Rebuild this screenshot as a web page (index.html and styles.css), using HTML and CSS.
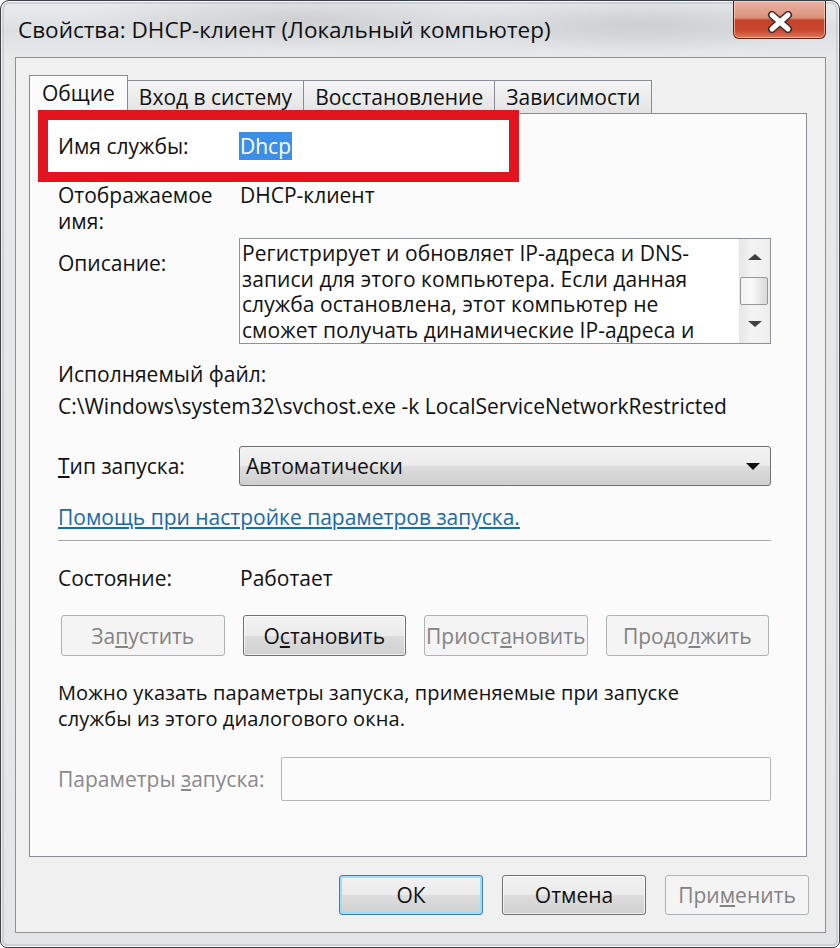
FILE: index.html
```html
<!DOCTYPE html>
<html lang="ru">
<head>
<meta charset="utf-8">
<title>Свойства: DHCP-клиент (Локальный компьютер)</title>
<link rel="stylesheet" href="styles.css">
</head>
<body>
<div class="window">
  <div class="titlebar">
    <div class="title">Свойства: DHCP-клиент (Локальный компьютер)</div>
    <div class="close">
      <svg width="28" height="22" viewBox="0 0 28 22">
        <path d="M6 4 L22 18 M22 4 L6 18" stroke="#3a2a28" stroke-width="8" stroke-linecap="round"/>
        <path d="M6 4 L22 18 M22 4 L6 18" stroke="#ffffff" stroke-width="5" stroke-linecap="round"/>
      </svg>
    </div>
  </div>
  <div class="client">
    <div class="tabs">
      <div class="tab active">Общие</div>
      <div class="tab">Вход в систему</div>
      <div class="tab">Восстановление</div>
      <div class="tab">Зависимости</div>
    </div>
    <div class="panel">
      <div class="row name-row">
        <div class="label">Имя службы:</div>
        <div class="value"><span class="selected">Dhcp</span></div>
      </div>
      <div class="row display-row">
        <div class="label">Отображаемое<br>имя:</div>
        <div class="value">DHCP-клиент</div>
      </div>
      <div class="row desc-row">
        <div class="label desc-label">Описание:</div>
        <div class="desc-box">
          <div class="desc-text">Регистрирует и обновляет IP-адреса и DNS-<br>записи для этого компьютера. Если данная<br>служба остановлена, этот компьютер не<br>сможет получать динамические IP-адреса и</div>
          <div class="scrollbar">
            <div class="sb-btn sb-up"><span class="tri-up"></span></div>
            <div class="sb-track"><div class="sb-thumb"></div></div>
            <div class="sb-btn sb-down"><span class="tri-down"></span></div>
          </div>
        </div>
      </div>
      <div class="exe-label">Исполняемый файл:</div>
      <div class="exe-path">C:\Windows\system32\svchost.exe -k LocalServiceNetworkRestricted</div>
      <div class="row start-row">
        <div class="label"><u>Т</u>ип запуска:</div>
        <div class="combo">
          <span>Автоматически</span>
          <span class="combo-arrow"></span>
        </div>
      </div>
      <a class="help-link" href="#">Помощь при настройке параметров запуска.</a>
      <div class="separator"></div>
      <div class="row status-row">
        <div class="label">Состояние:</div>
        <div class="value">Работает</div>
      </div>
      <div class="service-buttons">
        <div class="btn disabled">За<u>п</u>устить</div>
        <div class="btn">О<u>с</u>тановить</div>
        <div class="btn disabled">Приост<u>а</u>новить</div>
        <div class="btn disabled">Продо<u>л</u>жить</div>
      </div>
      <p class="note">Можно указать параметры запуска, применяемые при запуске<br>службы из этого диалогового окна.</p>
      <div class="row params-row">
        <div class="label params-label">Параметры <u>з</u>апуска:</div>
        <div class="params-input"></div>
      </div>
    </div>
    <div class="footer">
      <div class="btn dlg default">ОК</div>
      <div class="btn dlg">Отмена</div>
      <div class="btn dlg disabled">При<u>м</u>енить</div>
    </div>
  </div>
</div>
</body>
</html>
```

FILE: styles.css
```css
* { box-sizing: border-box; }
html, body { margin: 0; padding: 0; background: #ffffff; }
body {
  width: 840px;
  height: 948px;
  overflow: hidden;
  font-family: "Open Sans", "Noto Sans", sans-serif;
  font-size: 21px;
  color: #111;
}
.window {
  width: 840px;
  height: 948px;
  border: 1px solid #3d4145;
  border-radius: 9px 9px 7px 7px;
  background:
    radial-gradient(ellipse 220px 30px at 300px 18px, rgba(170,170,170,0.35), rgba(170,170,170,0) 100%),
    radial-gradient(ellipse 200px 30px at 640px 22px, rgba(160,160,160,0.3), rgba(160,160,160,0) 100%),
    linear-gradient(180deg, #e9ebed 0, #dde0e3 30px, #e6e8ea 56px, #e3e5e7 100%);
  padding: 0 13px 14px 14px;
  display: flex;
  flex-direction: column;
  box-shadow: inset 0 0 0 1px rgba(255,255,255,0.8), inset 0 0 0 3px rgba(190,194,198,0.6);
}
.titlebar {
  height: 56px;
  display: flex;
  justify-content: space-between;
  align-items: flex-start;
}
.title {
  margin: 15px 0 0 3px;
  font-size: 22.5px;
  line-height: 28px;
  color: #101010;
  white-space: nowrap;
}
.close {
  width: 93px;
  height: 38px;
  border: 1px solid #5a231a;
  border-top: none;
  border-radius: 0 0 6px 6px;
  background: linear-gradient(180deg, #eab4a4 0, #dc917b 45%, #c4412a 52%, #c9492f 80%, #dd7a5d 100%);
  box-shadow: inset 0 0 0 1px rgba(255,220,210,0.6);
  display: flex;
  align-items: center;
  justify-content: center;
  padding-top: 4px;
}
.client {
  flex: 1;
  border: 1px solid #8e9093;
  background: #f0f0f0;
  padding: 17px 18px 17px 13px;
  display: flex;
  flex-direction: column;
}
.tabs {
  display: flex;
  align-items: flex-end;
  height: 39px;
  margin-bottom: -1px;
  position: relative;
  z-index: 1;
}
.tab {
  height: 33px;
  margin-bottom: 1px;
  margin-left: -1px;
  padding: 0 11px;
  border: 1px solid #898c95;
  border-bottom: none;
  background: linear-gradient(180deg, #f5f5f5, #e3e3e3);
  display: flex;
  align-items: center;
  white-space: nowrap;
  line-height: 26px;
}
.tab.active {
  height: 39px;
  margin-bottom: 0;
  margin-left: 0;
  padding: 0 12px 4px;
  background: #fbfbfb;
  position: relative;
  z-index: 2;
}
.panel {
  flex: 1;
  border: 1px solid #898c95;
  background: #fbfbfb;
  padding: 0 35px 0 28px;
  display: flex;
  flex-direction: column;
  line-height: 26px;
}
.row {
  display: flex;
}
.label {
  width: 181px;
  flex: none;
}
.name-row {
  position: relative;
  z-index: 3;
  margin: -4px 0 0 -20px;
  width: 481px;
  border: 10px solid #e2141f;
  background: #ffffff;
  padding: 13px 0 13px 10px;
}
.selected {
  background: #3d8ee6;
  color: #fff;
  padding: 0 1px;
}
.display-row .value { margin-left: 1px; }
.desc-row { margin-top: 4px; }
.desc-label { padding-top: 12px; }
.desc-box {
  flex: 1;
  height: 106px;
  display: flex;
  border: 1px solid #8f9296;
  background: #ffffff;
  overflow: hidden;
}
.desc-text {
  flex: 1;
  padding: 2px 0 0 2px;
  line-height: 25.5px;
  white-space: nowrap;
  overflow: hidden;
  letter-spacing: 0.05px;
}
.scrollbar {
  width: 31px;
  display: flex;
  flex-direction: column;
  background: linear-gradient(90deg, #e6e6e6, #f3f3f3 40%, #efefef);
}
.sb-btn {
  height: 36px;
  display: flex;
  align-items: center;
  justify-content: center;
}
.sb-down { height: 38px; }
.sb-track { flex: 1; padding: 2px 2px 0 1px; }
.sb-thumb {
  height: 28px;
  border: 1px solid #979797;
  border-radius: 2px;
  background: linear-gradient(90deg, #f2f2f2, #fafafa 40%, #d8d8d8);
}
.tri-up, .tri-down {
  width: 0;
  height: 0;
  border-left: 7px solid transparent;
  border-right: 7px solid transparent;
}
.tri-up { border-bottom: 6px solid #404040; }
.tri-down { border-top: 6px solid #404040; }
.exe-label { margin-top: 17px; }
.exe-path { margin-top: 6px; white-space: nowrap; }
.start-row { margin-top: 27px; align-items: center; height: 40px; }
.combo {
  flex: 1;
  height: 40px;
  border: 1px solid #707070;
  border-radius: 3px;
  background: linear-gradient(180deg, #f3f3f3 0, #ebebeb 50%, #dddddd 51%, #cfcfcf 100%);
  display: flex;
  align-items: center;
  justify-content: space-between;
  padding: 0 10px 0 6px;
}
.combo-arrow {
  width: 0;
  height: 0;
  border-left: 7px solid transparent;
  border-right: 7px solid transparent;
  border-top: 7px solid #111;
}
.help-link {
  margin-top: 18px;
  color: #1a6aaa;
  text-decoration: underline;
  align-self: flex-start;
}
.separator {
  margin-top: 10px;
  height: 2px;
  border-top: 1px solid #a5a5a5;
  border-bottom: 1px solid #ffffff;
}
.status-row { margin-top: 23px; }
.status-row .value { margin-left: 1px; }
.service-buttons {
  margin-top: 24px;
  display: grid;
  grid-template-columns: repeat(4, 1fr);
  gap: 18px;
  padding: 0 2px 0 3px;
}
.btn {
  height: 41px;
  border: 1px solid #707070;
  border-radius: 3px;
  background: linear-gradient(180deg, #f2f2f2 0, #ebebeb 50%, #dddddd 51%, #cfcfcf 100%);
  box-shadow: inset 0 0 0 1px rgba(255,255,255,0.7);
  display: flex;
  align-items: center;
  justify-content: center;
  white-space: nowrap;
  color: #111;
}
.btn.disabled {
  border-color: #adb2b5;
  background: #f4f4f4;
  box-shadow: none;
  color: #838383;
}
.note { margin: 24px 0 0; font-size: 20px; letter-spacing: 0.12px; }
.params-row { margin-top: 25px; align-items: center; }
.params-label { width: 223px; color: #8a8a8a; }
.params-input {
  flex: 1;
  height: 44px;
  border: 1px solid #b5b5b5;
  border-radius: 2px;
  background: #fbfbfb;
}
.footer {
  margin-top: 18px;
  margin-right: -2px;
  display: flex;
  justify-content: flex-end;
  gap: 19px;
}
.btn.dlg {
  width: 144px;
  height: 40px;
}
.btn.default {
  border-color: #3c7fb1;
  box-shadow: inset 0 0 0 2px #9fdcf8;
}
u { text-decoration: underline; text-underline-offset: 2px; }
```
